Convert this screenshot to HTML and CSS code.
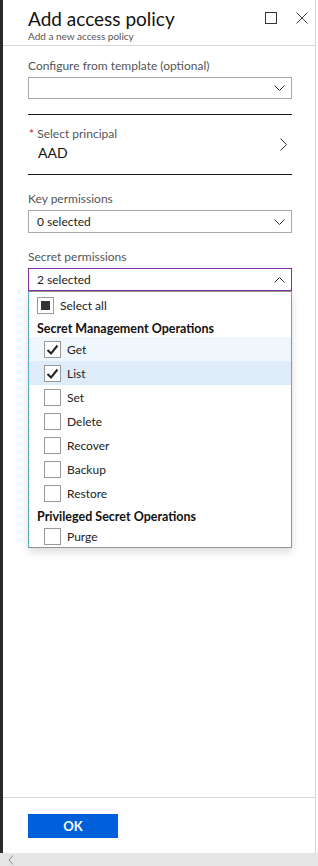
FILE: index.html
```html
<!DOCTYPE html>
<html lang="en">
<head>
  <meta charset="UTF-8" />
  <meta name="viewport" content="width=device-width, initial-scale=1.0" />
  <title>Add access policy</title>
  <link rel="stylesheet" href="styles.css">
</head>
<body>
  <div class="blade">
    <header class="blade-head">
      <div class="titles">
        <h1>Add access policy</h1>
        <p>Add a new access policy</p>
      </div>
      <div class="actions">
        <svg width="12" height="12" viewBox="0 0 12 12"><rect x="0.5" y="0.5" width="11" height="11" fill="none" stroke="#333" stroke-width="1"/></svg>
        <svg width="12" height="12" viewBox="0 0 12 12"><path d="M0.5 0.5 L11.5 11.5 M11.5 0.5 L0.5 11.5" stroke="#444" stroke-width="1" fill="none"/></svg>
      </div>
    </header>

    <div class="blade-body">
      <div class="field first">
        <label>Configure from template (optional)</label>
        <div class="select">
          <span></span>
          <svg class="chev" width="11" height="6" viewBox="0 0 11 6"><path d="M0.5 0.5 L5.5 5.5 L10.5 0.5" stroke="#333" fill="none"/></svg>
        </div>
      </div>

      <div class="principal">
        <div>
          <div class="principal-label"><span class="req">*</span> Select principal</div>
          <div class="principal-value">AAD</div>
        </div>
        <svg width="7" height="13" viewBox="0 0 7 13"><path d="M0.5 0.5 L6.5 6.5 L0.5 12.5" stroke="#333" fill="none"/></svg>
      </div>

      <div class="field">
        <label>Key permissions</label>
        <div class="select">
          <span>0 selected</span>
          <svg class="chev" width="11" height="6" viewBox="0 0 11 6"><path d="M0.5 0.5 L5.5 5.5 L10.5 0.5" stroke="#333" fill="none"/></svg>
        </div>
      </div>

      <div class="field">
        <label>Secret permissions</label>
        <div class="select active">
          <span>2 selected</span>
          <svg class="chev" width="11" height="6" viewBox="0 0 11 6"><path d="M0.5 5.5 L5.5 0.5 L10.5 5.5" stroke="#333" fill="none"/></svg>
        </div>
        <div class="dropdown">
          <div class="opt all"><span class="box"><i></i></span>Select all</div>
          <div class="group">Secret Management Operations</div>
          <div class="opt sub hover"><span class="box"><svg width="13" height="13" viewBox="0 0 13 13"><path d="M1.5 7 L5 10.5 L11.5 2.5" stroke="#222" stroke-width="2" fill="none"/></svg></span>Get</div>
          <div class="opt sub selected"><span class="box"><svg width="13" height="13" viewBox="0 0 13 13"><path d="M1.5 7 L5 10.5 L11.5 2.5" stroke="#222" stroke-width="2" fill="none"/></svg></span>List</div>
          <div class="opt sub"><span class="box"></span>Set</div>
          <div class="opt sub"><span class="box"></span>Delete</div>
          <div class="opt sub"><span class="box"></span>Recover</div>
          <div class="opt sub"><span class="box"></span>Backup</div>
          <div class="opt sub"><span class="box"></span>Restore</div>
          <div class="group">Privileged Secret Operations</div>
          <div class="opt sub last"><span class="box"></span>Purge</div>
        </div>
      </div>
    </div>

    <footer class="blade-foot">
      <button class="btn-ok">OK</button>
    </footer>
  </div>
  <div class="scrollbar">
    <svg width="6" height="10" viewBox="0 0 6 10"><path d="M5 0.5 L1 5 L5 9.5" stroke="#888" fill="none"/></svg>
  </div>
</body>
</html>
```

FILE: styles.css
```css
* {
  box-sizing: border-box;
}

body {
  margin: 0;
  width: 318px;
  height: 866px;
  font-family: 'Lato', 'Open Sans', sans-serif;
  color: #222;
  background: #fff;
  display: flex;
  flex-direction: column;
  overflow: hidden;
}

.blade {
  flex: 1;
  display: flex;
  flex-direction: column;
  border-left: 3px solid #2b2b2b;
  border-right: 1px solid #d6d6d6;
  margin-right: 2px;
  background: #fff;
}

.blade-head {
  display: flex;
  justify-content: space-between;
  padding: 7px 7px 0 25px;
  height: 46px;
  border-bottom: 1px solid #d4d4d4;
}

.blade-head h1 {
  margin: 0;
  font-size: 19px;
  font-weight: 400;
  line-height: 24px;
  color: #111;
}

.blade-head p {
  margin: 0;
  font-size: 10px;
  line-height: 11px;
  color: #555;
}

.actions {
  display: flex;
  gap: 19px;
  padding-top: 5px;
}

.blade-body {
  flex: 1;
  padding: 0 23px 0 25px;
}

.field {
  margin-top: 15px;
}

.field.first {
  margin-top: 11px;
}

.field label {
  display: block;
  font-size: 12px;
  line-height: 18px;
  color: #555;
  margin-bottom: 2px;
}

.select {
  height: 23px;
  border: 1px solid #a8a8a8;
  display: flex;
  align-items: center;
  justify-content: space-between;
  padding: 0 6px 0 8px;
  font-size: 12px;
  color: #222;
}

.field.first .select {
  height: 22px;
}

.select.active {
  border-color: #7f2f9c;
}

.chev {
  display: block;
}

.principal {
  margin-top: 15px;
  border-top: 1px solid #1a1a1a;
  border-bottom: 1px solid #1a1a1a;
  height: 61px;
  display: flex;
  align-items: center;
  justify-content: space-between;
  padding: 0 5px 0 1px;
}

.principal-label {
  font-size: 12px;
  line-height: 16px;
  color: #555;
}

.req {
  color: #e81123;
}

.principal-value {
  font-size: 14px;
  line-height: 21px;
  padding-left: 9px;
  color: #111;
}

.dropdown {
  border: 1px solid #a0a0a0;
  outline: 1px dotted #16b1ea;
  outline-offset: -1px;
  box-shadow: 0 4px 8px rgba(0, 0, 0, 0.14);
  padding-top: 1px;
}

.opt {
  height: 24px;
  display: flex;
  align-items: center;
  font-size: 12px;
  color: #222;
  padding-left: 8px;
}

.opt.sub {
  padding-left: 15px;
}

.opt.hover {
  background: #eff6fc;
}

.opt.selected {
  background: #deecf9;
}

.opt.last {
  height: 22px;
}

.box {
  width: 17px;
  height: 17px;
  border: 1px solid #999;
  background: #fff;
  margin-right: 6px;
  display: flex;
  align-items: center;
  justify-content: center;
  flex: none;
}

.box i {
  display: block;
  width: 9px;
  height: 9px;
  background: #333;
}

.group {
  height: 20px;
  padding-top: 2px;
  display: flex;
  align-items: center;
  font-size: 12.5px;
  font-weight: 700;
  padding-left: 8px;
  color: #111;
}

.blade-foot {
  height: 56px;
  border-top: 1px solid #d4d4d4;
  padding: 16px 0 0 25px;
}

.btn-ok {
  display: block;
  width: 90px;
  height: 24px;
  border: none;
  background: #005fdb;
  color: #fff;
  font-family: 'Lato', 'Open Sans', sans-serif;
  font-size: 13px;
  font-weight: 700;
  padding: 0;
}

.scrollbar {
  height: 13px;
  background: #e6e6e6;
  display: flex;
  align-items: center;
  padding-left: 8px;
}
```
